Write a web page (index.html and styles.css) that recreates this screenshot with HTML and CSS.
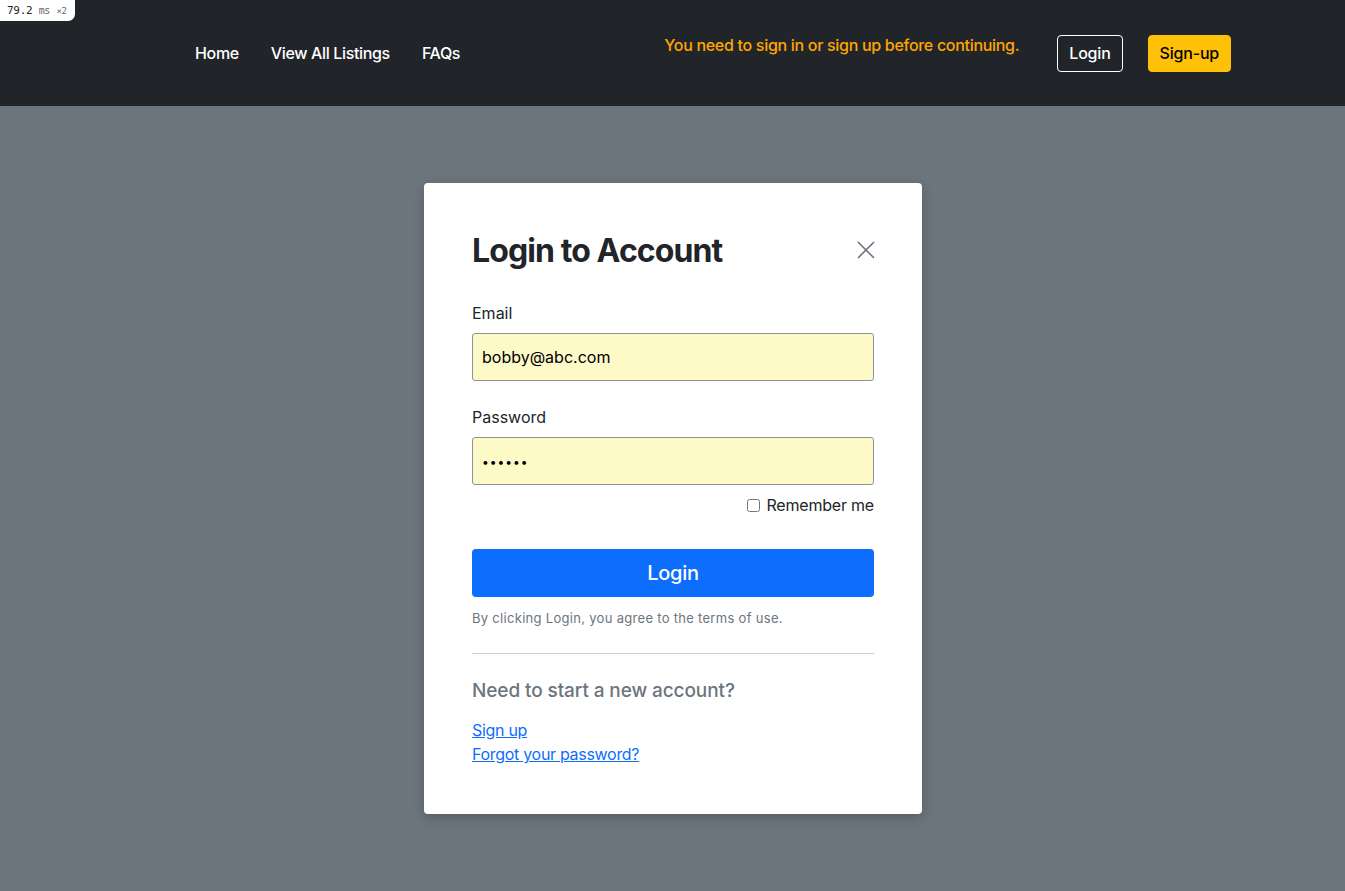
FILE: index.html
```html
<!DOCTYPE html>
<html lang="en">
<head>
<meta charset="utf-8">
<title>Login to Account</title>
<link rel="stylesheet" href="styles.css">
</head>
<body>
<div class="perf-badge"><span class="perf-num">79.2</span> <span class="perf-unit">ms</span> <span class="perf-mult">×2</span></div>
<header class="navbar">
  <nav class="nav-links">
    <a href="#" class="nav-link">Home</a>
    <a href="#" class="nav-link">View All Listings</a>
    <a href="#" class="nav-link">FAQs</a>
  </nav>
  <div class="nav-right">
    <p class="notice">You need to sign in or sign up before continuing.</p>
    <a href="#" class="btn btn-outline">Login</a>
    <a href="#" class="btn btn-warning">Sign-up</a>
  </div>
</header>
<main class="backdrop">
  <section class="modal">
    <div class="modal-head">
      <h1 class="modal-title">Login to Account</h1>
      <button class="close" aria-label="Close">
        <svg width="18" height="18" viewBox="0 0 18 18"><path d="M1 1L17 17M17 1L1 17" stroke="#6c757d" stroke-width="1.6" fill="none"/></svg>
      </button>
    </div>
    <form class="form">
      <label class="label" for="email">Email</label>
      <input class="input" id="email" type="email" value="bobby@abc.com">
      <label class="label label-gap" for="pw">Password</label>
      <input class="input input-pw" id="pw" type="password" value="secret">
      <div class="remember">
        <input type="checkbox" id="rem" class="check">
        <label for="rem">Remember me</label>
      </div>
      <button type="button" class="btn-primary">Login</button>
      <p class="terms">By clicking Login, you agree to the terms of use.</p>
    </form>
    <hr class="divider">
    <h2 class="subhead">Need to start a new account?</h2>
    <div class="links">
      <a href="#" class="link">Sign up</a>
      <a href="#" class="link">Forgot your password?</a>
    </div>
  </section>
</main>
</body>
</html>
```
FILE: styles.css
```css
* { box-sizing: border-box; }
html, body { margin: 0; padding: 0; }
body {
  font-family: Inter, "Liberation Sans", sans-serif;
  font-size: 16px;
  line-height: 1.5;
  color: #212529;
  background: #6c757d;
  min-height: 891px;
}
.perf-badge {
  position: absolute;
  top: 0; left: 0;
  width: 75px; height: 21px;
  background: #fff;
  border-bottom-right-radius: 7px;
  font-family: "DejaVu Sans Mono", monospace;
  font-size: 11px;
  line-height: 21px;
  padding-left: 7px;
  color: #222;
  white-space: nowrap;
  letter-spacing: -0.3px;
  z-index: 5;
}
.perf-unit { color: #666; font-size: 10px; }
.perf-mult { color: #666; font-size: 9px; }
.navbar {
  height: 106px;
  background: #212529;
  display: flex;
  align-items: center;
  justify-content: space-between;
  padding: 0 114px 0 179px;
}
.nav-links { display: flex; }
.nav-link {
  color: #fff;
  text-decoration: none;
  font-weight: 500;
  padding: 8px 16px;
  letter-spacing: -0.35px;
}
.nav-right { display: flex; align-items: center; }
.notice {
  margin: 0 38px 16px 0;
  color: #ffa500;
  font-weight: 500;
  letter-spacing: -0.3px;
}
.btn {
  display: inline-block;
  height: 37px;
  line-height: 35px;
  padding: 0 11px;
  border-radius: 4px;
  text-decoration: none;
  font-weight: 500;
  border: 1px solid transparent;
  letter-spacing: -0.2px;
}
.btn-outline { color: #fff; border-color: #fff; margin-right: 25px; }
.btn-warning { background: #ffc107; border-color: #ffc107; color: #000; }
.backdrop {
  display: flex;
  justify-content: center;
  padding-top: 77px;
}
.modal {
  width: 498px;
  margin-left: 1px;
  background: #fff;
  border-radius: 4px;
  padding: 49px 48px 48px;
  box-shadow: 0 4px 12px rgba(0,0,0,0.2);
}
.modal-head {
  display: flex;
  justify-content: space-between;
  align-items: center;
}
.modal-title {
  margin: 0;
  font-size: 32px;
  font-weight: 700;
  line-height: 38px;
  letter-spacing: -0.9px;
}
.close {
  background: none;
  border: 0;
  padding: 0;
  width: 18px; height: 18px;
  margin-right: -1px;
  margin-top: -2px;
  display: flex;
}
.form { display: flex; flex-direction: column; margin-top: 31px; }
.label { display: block; margin-bottom: 8px; font-size: 16px; }
.label-gap { margin-top: 24px; }
.input {
  height: 48px;
  border: 1px solid #8f8f9d;
  border-radius: 3px;
  background: #fefac8;
  font-family: inherit;
  font-size: 16px;
  padding: 0 9px;
  color: #000;
}
.input-pw { font-size: 12px; letter-spacing: 1px; }
.remember {
  display: flex;
  justify-content: flex-end;
  align-items: center;
  margin-top: 8px;
  height: 24px;
}
.check {
  width: 13px; height: 13px;
  margin: 0 6px 0 0;
}
.remember label { letter-spacing: -0.2px; }
.btn-primary {
  margin-top: 32px;
  height: 48px;
  background: #0d6efd;
  color: #fff;
  border: 0;
  border-radius: 4px;
  font-family: inherit;
  font-size: 20px;
  font-weight: 500;
  letter-spacing: -0.3px;
}
.terms {
  margin: 11px 0 0;
  font-size: 13px;
  line-height: 20px;
  color: #6c757d;
  letter-spacing: 0.3px;
}
.divider {
  margin: 25px 0 0;
  border: 0;
  border-top: 1px solid #cfcfcf;
}
.subhead {
  margin: 26px 0 0;
  font-size: 19px;
  line-height: 22px;
  font-weight: 500;
  color: #6c757d;
  letter-spacing: -0.1px;
}
.links { display: flex; flex-direction: column; align-items: flex-start; margin-top: 16px; }
.link { color: #0d6efd; text-decoration: underline; line-height: 24px; letter-spacing: -0.3px; }
```
